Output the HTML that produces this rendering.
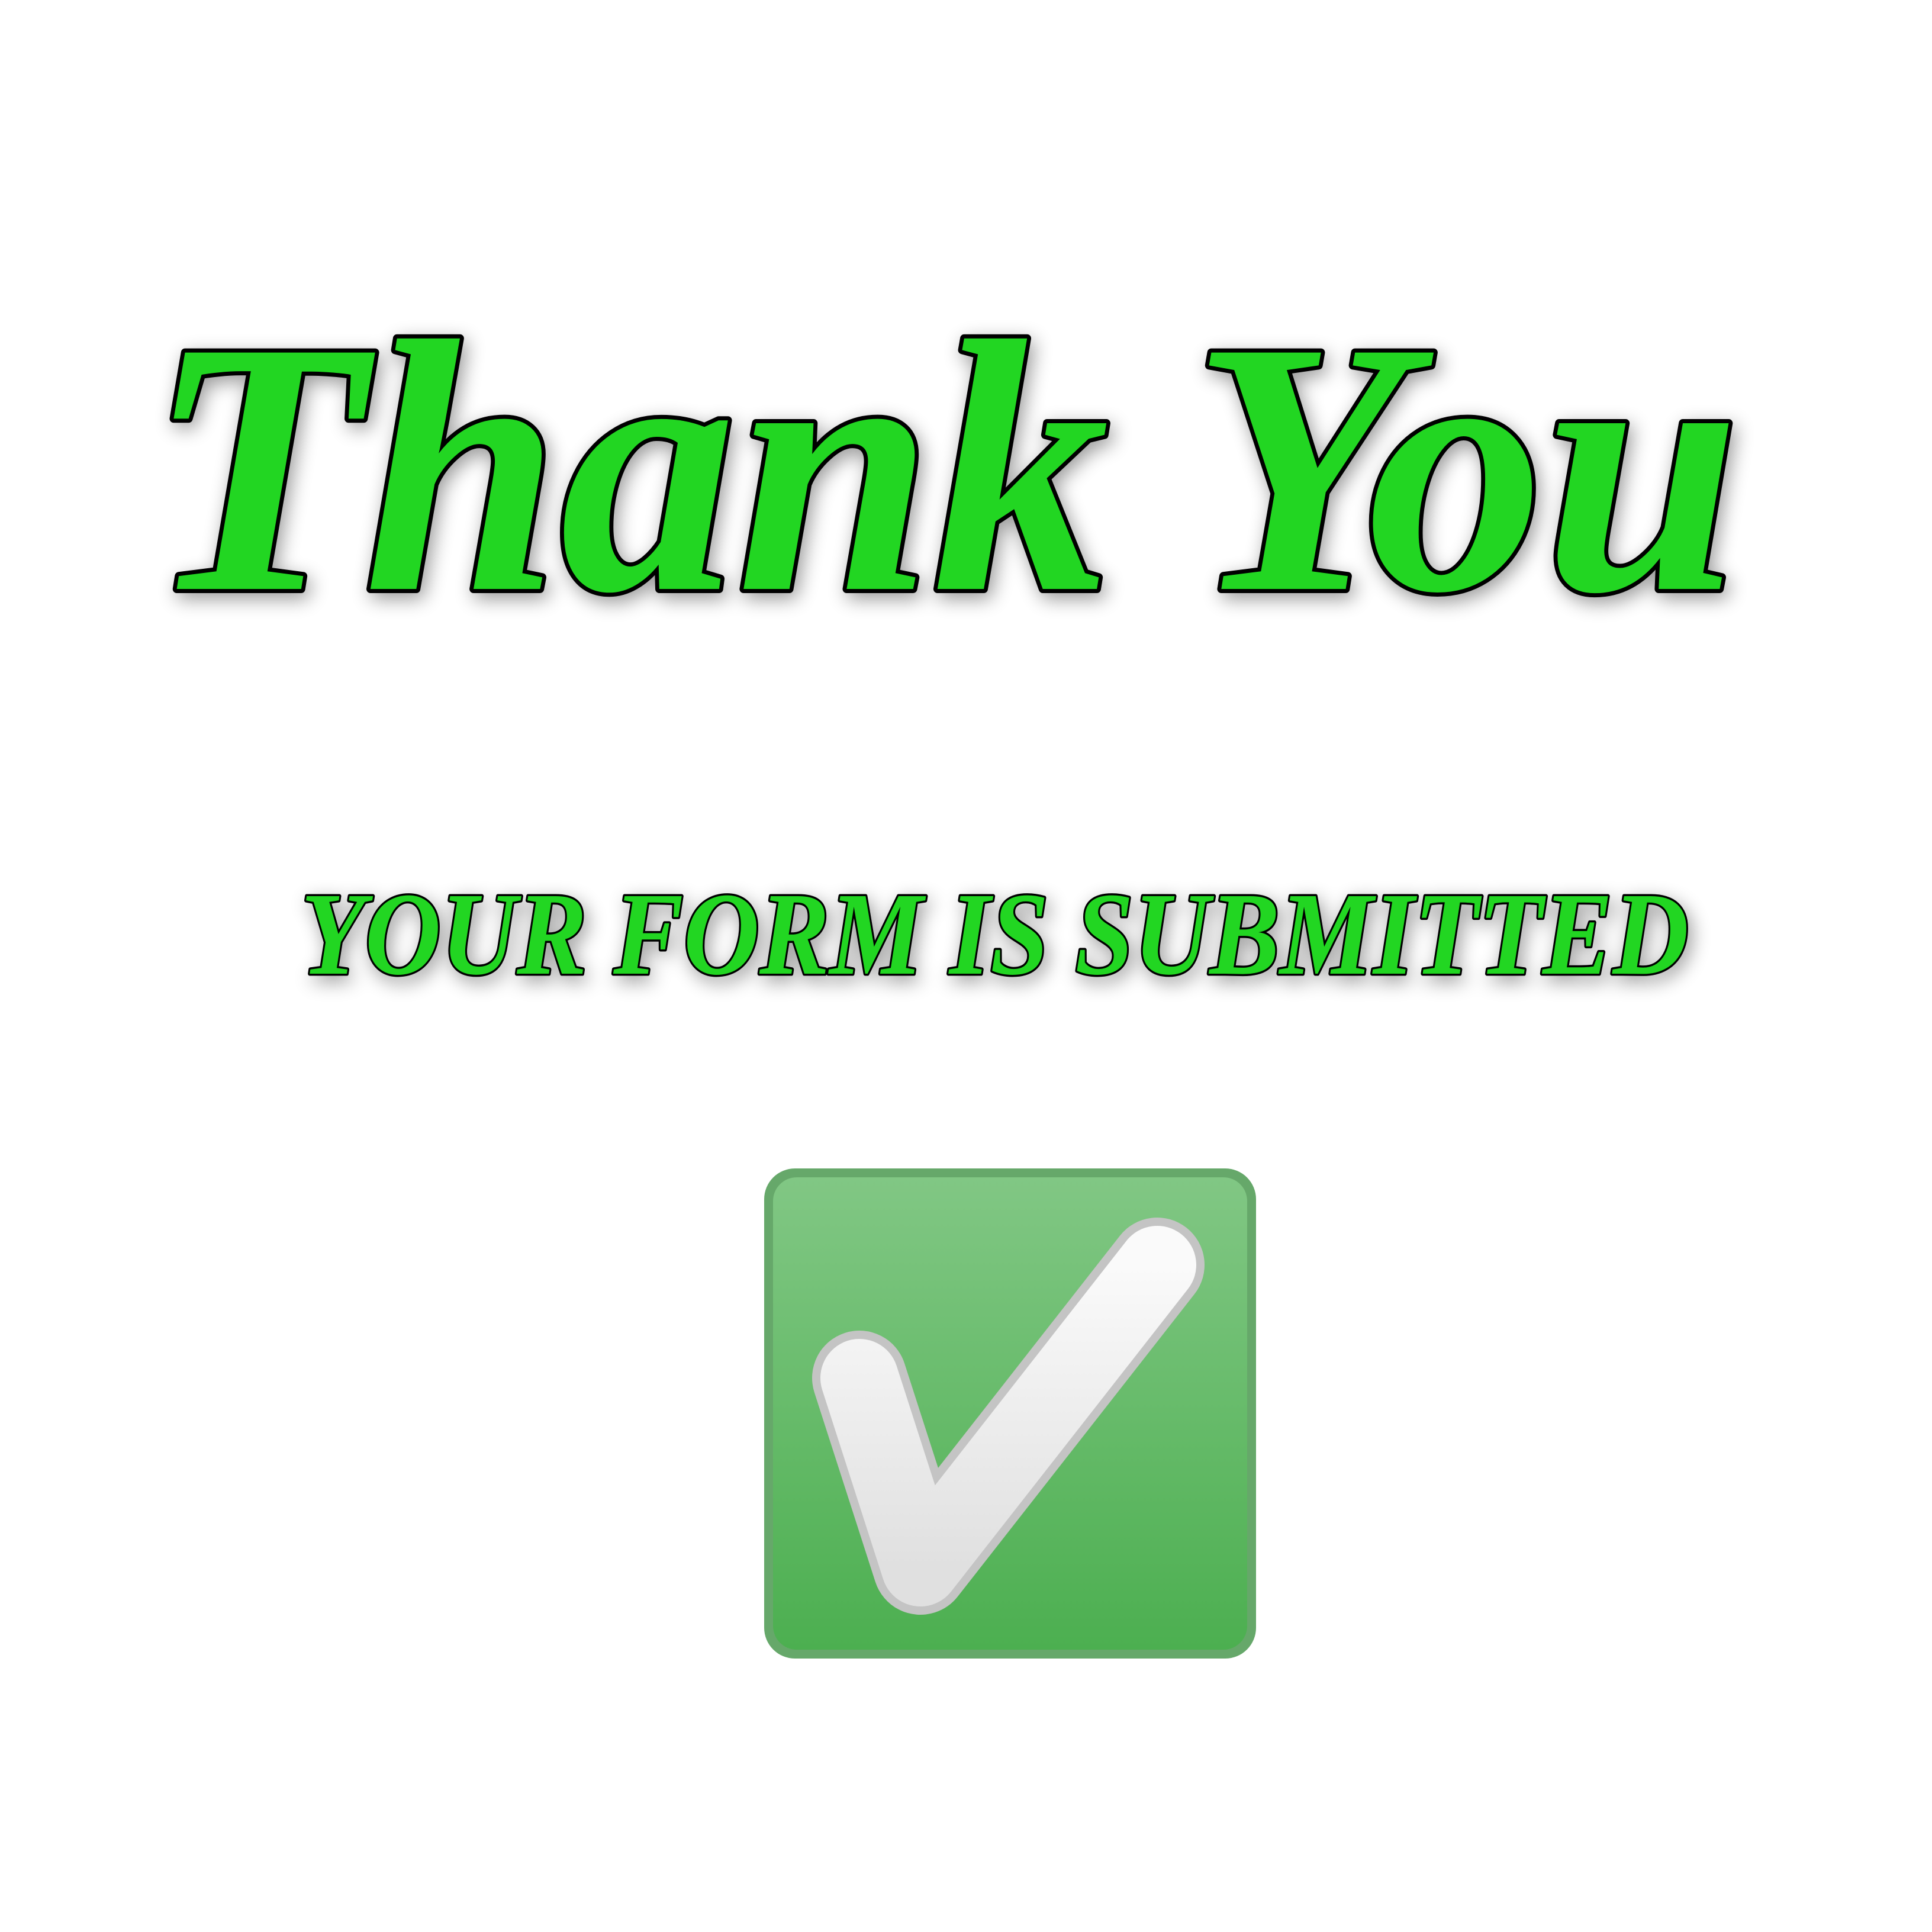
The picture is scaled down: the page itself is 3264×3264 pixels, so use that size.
<!DOCTYPE html>
<html><head><meta charset="utf-8"><style>html,body{margin:0;padding:0;background:#fff;}svg{display:block}</style></head>
<body>
<svg width="3264" height="3264" viewBox="0 0 3264 3264" xmlns="http://www.w3.org/2000/svg">
<defs>
<filter id="sh" x="-10%" y="-20%" width="120%" height="150%">
<feGaussianBlur in="SourceAlpha" stdDeviation="16"/><feOffset dx="6" dy="10"/>
<feComponentTransfer><feFuncA type="linear" slope="0.4"/></feComponentTransfer>
<feMerge><feMergeNode/><feMergeNode in="SourceGraphic"/></feMerge></filter>
<linearGradient id="g" x1="0" y1="0" x2="0" y2="1"><stop offset="0" stop-color="#81c784"/><stop offset="1" stop-color="#4caf50"/></linearGradient>
<linearGradient id="w" x1="0" y1="0" x2="0" y2="1"><stop offset="0" stop-color="#fafafa"/><stop offset="1" stop-color="#e0e0e0"/></linearGradient>
</defs>
<rect width="3264" height="3264" fill="#fff"/>
<g filter="url(#sh)" font-family="Liberation Serif, serif" font-weight="bold" font-style="italic" fill="#22d622" stroke="#000" stroke-linejoin="round" paint-order="stroke">
<text x="250" y="995" font-size="610" stroke-width="14" textLength="2690" lengthAdjust="spacingAndGlyphs">Thank You</text>
<text x="508" y="1645" font-size="200" stroke-width="7" textLength="2345" lengthAdjust="spacingAndGlyphs">YOUR FORM IS SUBMITTED</text>
</g>
<rect x="1291" y="1974" width="831" height="828" rx="52" fill="#66a86a"/>
<rect x="1306" y="1989" width="801" height="798" rx="40" fill="url(#g)"/>
<path d="M1452 2328 L1555 2648 L1955 2137" fill="none" stroke="#c4c4c4" stroke-width="160" stroke-linecap="round" stroke-linejoin="round"/>
<path d="M1452 2328 L1555 2648 L1955 2137" fill="none" stroke="url(#w)" stroke-width="132" stroke-linecap="round" stroke-linejoin="round"/>
</svg>
</body></html>
